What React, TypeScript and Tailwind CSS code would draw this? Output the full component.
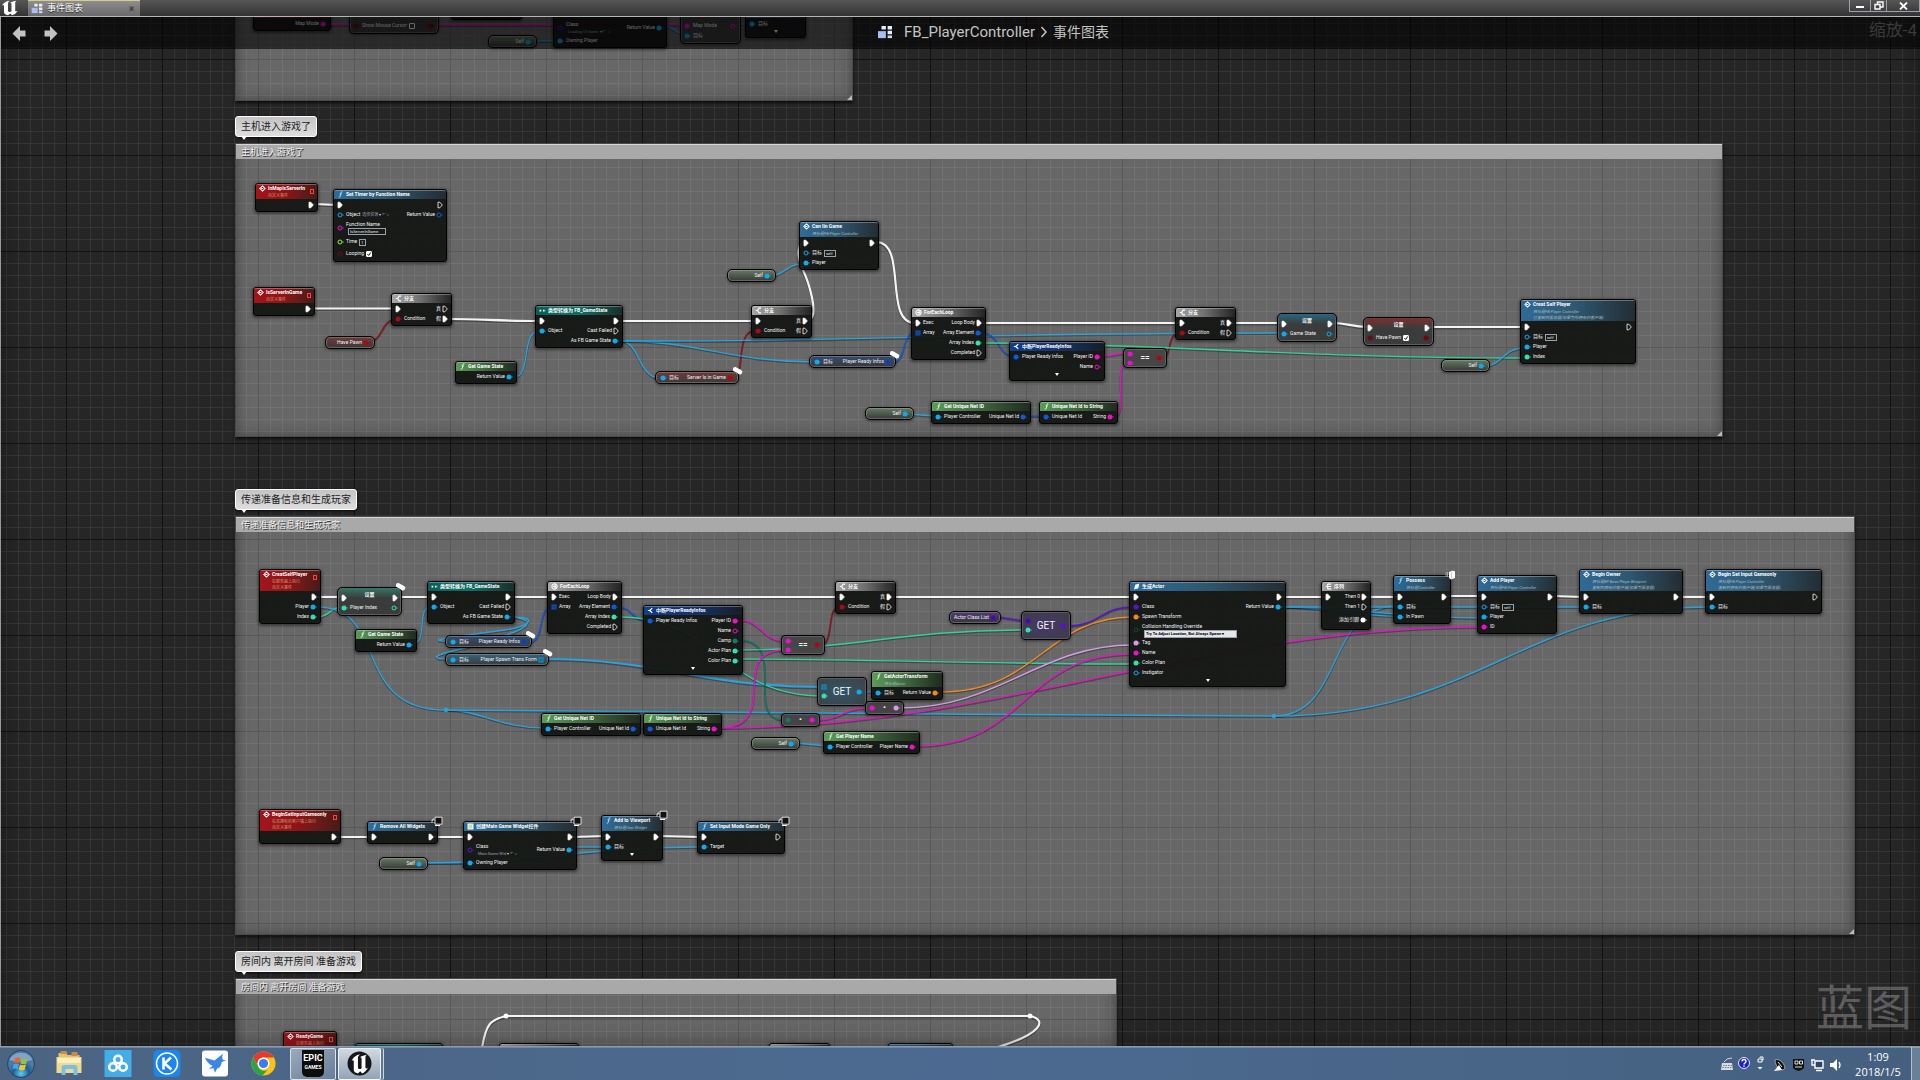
import type { ReactNode } from 'react';

type Shape = 'exec' | 'dot' | 'square';
type Pin = { shape: Shape; color: string; label?: string; open?: boolean; extra?: ReactNode };
type Row = { left?: Pin; right?: Pin; tall?: 'md' | 'lg' };
type Kind = 'event' | 'func' | 'pure' | 'cast' | 'macro' | 'struct';

const CYAN = '#14a8ea';
const BLUE = '#1558d6';
const MINT = '#35e0ae';
const PINK = '#e813c9';
const RED = '#a30d12';
const LILAC = '#d99be8';
const ORANGE = '#f08a24';
const PURPLE = '#5a14c8';
const TEAL = '#0f7a66';
const WIRE = '#2aa3dc';

const ex = (label?: string, open?: boolean): Pin => ({ shape: 'exec', color: '#fff', label, open });
const dot = (color: string, label?: string, open?: boolean, extra?: ReactNode): Pin => ({ shape: 'dot', color, label, open, extra });
const sq = (color: string, label?: string): Pin => ({ shape: 'square', color, label });

const TextBox = ({ value, name, wide }: { value: string; name: string; wide?: boolean }) => (
  <input
    aria-label={name}
    defaultValue={value}
    className={`h-[7px] border border-gray-400 bg-transparent px-px text-[4px] leading-none text-gray-200 ${wide ? 'w-[38px]' : value.length > 2 ? 'w-[12px]' : 'w-[7px]'}`}
  />
);

const Tick = ({ name, checked = true }: { name: string; checked?: boolean }) => (
  <span className="relative flex h-[6px] w-[6px]">
    <input type="checkbox" aria-label={name} defaultChecked={checked} className="peer h-[6px] w-[6px] appearance-none rounded-[1px] border border-white bg-transparent checked:bg-white" />
    <svg viewBox="0 0 6 6" className="pointer-events-none absolute inset-0 hidden peer-checked:block">
      <path d="M1.4 3l1.3 1.4L4.8 1.4" fill="none" stroke="#111" strokeWidth="1" />
    </svg>
  </span>
);

const AssetPick = ({ text }: { text: string }) => (
  <button type="button" className="flex items-center gap-px text-[4px] leading-none text-gray-400">
    {text}<span className="text-gray-300">▾</span><span>←</span><span>⌕</span>
  </button>
);

const PinIcon = ({ pin }: { pin: Pin }) => {
  if (pin.shape === 'exec') {
    return (
      <svg viewBox="0 0 6 8" className="h-[8px] w-[6px] shrink-0">
        <path d="M1 1.2h1.8L5.3 4 2.8 6.8H1z" fill={pin.open ? 'none' : pin.color} stroke={pin.color} strokeWidth=".8" />
      </svg>
    );
  }
  if (pin.shape === 'square') {
    return (
      <svg viewBox="0 0 6 6" className="h-[6px] w-[6px] shrink-0">
        <path d="M.5 .5h5v5h-5z" fill={pin.color} />
        <path d="M2.2 .5v5M3.9 .5v5M.5 2.2h5M.5 3.9h5" stroke="#111" strokeWidth=".3" />
      </svg>
    );
  }
  return (
    <svg viewBox="0 0 7 6" className="h-[6px] w-[7px] shrink-0">
      <circle cx="3" cy="3" r={pin.open ? 2 : 2.5} fill={pin.open ? 'none' : pin.color} stroke={pin.color} strokeWidth={pin.open ? 1 : 0} />
      <path d="M5.6 1.9L6.9 3 5.6 4.1z" fill={pin.color} />
    </svg>
  );
};

const headerStyles: Record<Kind, string> = {
  event: 'bg-linear-to-r from-[#a3151b] via-[#8b1318] to-[#471a17]',
  func: 'bg-linear-to-r from-[#2f6b98] via-[#2e566f] to-[#222d33]',
  pure: 'bg-linear-to-r from-[#5d9a5b] via-[#3f663e] to-[#1f2b1f]',
  cast: 'bg-linear-to-r from-[#0c5c57] via-[#0e6f67] to-[#16302c]',
  macro: 'bg-linear-to-r from-[#a8a8a8] via-[#6e6e6e] to-[#232423]',
  struct: 'bg-linear-to-r from-[#123f86] via-[#15336b] to-[#171d27]',
};

const HeadIcon = ({ kind, icon }: { kind: Kind; icon?: string }) => {
  const type = icon ?? kind;
  return (
    <svg viewBox="0 0 8 8" className="h-[7px] w-[7px] shrink-0" fill="none" stroke="#fff" strokeWidth="1.2">
      {(type === 'event' || type === 'call') && <path d="M4 1l3 3-3 3-3-3zM2.5 4h2.4" />}
      {(type === 'func' || type === 'pure') && <path d="M6.2 1C4.4.6 4.5 2 4.2 3.6 4 5.2 3.8 7.4 2 7M2.8 3.4h2.8" stroke={type === 'func' ? '#8fd0ff' : '#c9f5b8'} />}
      {type === 'cast' && <path d="M.6 4h2.6M4.6 4h2.6" strokeWidth="2" strokeDasharray="1.8 .6" />}
      {type === 'macro' && <path d="M1 4h2M7 1.3H4.6L3 4l1.6 2.7H7" />}
      {type === 'loop' && <><circle cx="4" cy="4" r="3" /><path d="M2.2 4h3M4 2.5L5.6 4 4 5.5" /></>}
      {type === 'seq' && <path d="M1 4h2M3 1v6M3 1.3h4M3 4h4M3 6.7h4" />}
      {type === 'struct' && <path d="M1 4h2l3-2.6M3 4l3 2.6" strokeWidth="1.3" />}
      {type === 'spawn' && <path d="M2 6.5l1-4 3.5-1-1 4z" fill="#fff" />}
      {type === 'widget' && <path d="M1.2 1.2h5.6v5.6H1.2z" fill="#cfd8b0" />}
    </svg>
  );
};

const PinRow = ({ row }: { row: Row }) => (
  <div className={`flex items-center justify-between ${row.tall === 'lg' ? 'h-[16px]' : row.tall === 'md' ? 'h-[12px]' : 'h-[10px]'}`}>
    <div className="flex items-center gap-[2px]">
      {row.left && (
        <>
          <PinIcon pin={row.left} />
          {row.tall === 'lg' ? (
            <div className="flex flex-col gap-px leading-[6px]"><span>{row.left.label}</span><div className="flex h-[7px] pl-[2px]">{row.left.extra}</div></div>
          ) : (
            <><span>{row.left.label}</span>{row.left.extra}</>
          )}
        </>
      )}
    </div>
    <div className="flex items-center gap-px">
      {row.right && <><span>{row.right.label}</span>{row.right.extra}<PinIcon pin={row.right} /></>}
    </div>
  </div>
);

// little marker that sits on a node's corner
const Badge = ({ type }: { type: 'tag' | 'screen' | 'server' }) => (
  <svg viewBox="0 0 12 10" className="absolute -top-[6px] -right-[6px] h-[10px] w-[12px]">
    {type === 'tag' && <path d="M3.5 1L9 4a2.200 2.200 0 0 1-2 4.200L3 5.800A2.400 2.400 0 0 1 3.500 1z" fill="#fff" />}
    {type === 'screen' && <><path d="M4 1.2h7v7H4z" fill="#111" stroke="#ddd" strokeWidth="1" /><path d="M3 3C1 3 1 5 1 6.5M4 9.5h5" stroke="#fff" fill="none" /></>}
    {type === 'server' && <><path d="M5 2l4-1.5 2 1V8L7 9.5 5 8z" fill="#fff" /><path d="M2 2.5v4M3.5 2v5M7.5 2.5v6" stroke="#bbb" strokeWidth=".8" /></>}
  </svg>
);

type NodeData = {
  x: number; y: number; w: number; kind: Kind; title: string; icon?: string; sub?: string[];
  rows: Row[]; caret?: boolean; badge?: 'tag' | 'screen' | 'server';
};

const self = <TextBox name="self" value="self" />;

const branch = (x: number, y: number, t: boolean, f: boolean): NodeData => ({
  x, y, w: 61, kind: 'macro', title: '分支',
  rows: [{ left: ex(), right: ex('真', t) }, { left: dot(RED, 'Condition'), right: ex('假', f) }],
});
const cast = (x: number, y: number): NodeData => ({
  x, y, w: 88, kind: 'cast', title: '类型转换为 FB_GameState',
  rows: [{ left: ex(), right: ex() }, { left: dot(CYAN, 'Object'), right: ex('Cast Failed', true) }, { right: dot(CYAN, 'As FB Game State') }],
});
const loop = (x: number, y: number): NodeData => ({
  x, y, w: 75, kind: 'macro', icon: 'loop', title: 'ForEachLoop',
  rows: [
    { left: ex('Exec'), right: ex('Loop Body') },
    { left: sq(BLUE, 'Array'), right: dot(BLUE, 'Array Element') },
    { right: dot(MINT, 'Array Index') },
    { right: ex('Completed', true) },
  ],
});
const gameState = (x: number, y: number): NodeData => ({ x, y, w: 62, kind: 'pure', title: 'Get Game State', rows: [{ right: dot(CYAN, 'Return Value') }] });
const netId = (x: number, y: number): NodeData => ({ x, y, w: 100, kind: 'pure', title: 'Get Unique Net ID', rows: [{ left: dot(CYAN, 'Player Controller'), right: dot(BLUE, 'Unique Net Id') }] });
const netIdString = (x: number, y: number): NodeData => ({ x, y, w: 79, kind: 'pure', title: 'Unique Net Id to String', rows: [{ left: dot(BLUE, 'Unique Net Id'), right: dot(PINK, 'String') }] });

const nodes: NodeData[] = [
  { x: 255, y: 183, w: 63, kind: 'event', title: 'InMapIsServerIn', sub: ['自定义事件'], rows: [{ right: ex() }] },
  {
    x: 333, y: 189, w: 114, kind: 'func', title: 'Set Timer by Function Name',
    rows: [
      { left: ex(), right: ex('', true) },
      { left: dot(CYAN, 'Object', true, <AssetPick text="选择资源" />), right: dot(BLUE, 'Return Value', true) },
      { left: dot(PINK, 'Function Name', true, <TextBox name="Function Name" value="IsServerInGame" wide />), tall: 'lg' },
      { left: dot('#9bea3c', 'Time', true, <TextBox name="Time" value="1" />), tall: 'md' },
      { left: dot('#6b0a0a', 'Looping', true, <Tick name="Looping" />), tall: 'md' },
    ],
  },
  { x: 253, y: 287, w: 62, kind: 'event', title: 'IsServerInGame', sub: ['自定义事件'], rows: [{ right: ex() }] },
  branch(391, 293, true, false),
  cast(535, 305),
  gameState(455, 361),
  {
    x: 799, y: 221, w: 80, kind: 'func', icon: 'call', title: 'Can Iin Game', sub: ['目标是FB Player Controller'],
    rows: [{ left: ex(), right: ex() }, { left: dot(CYAN, '目标', true, self) }, { left: dot(CYAN, 'Player') }],
  },
  branch(751, 305, false, true),
  loop(911, 307),
  {
    x: 1009, y: 341, w: 96, kind: 'struct', title: '中断PlayerReadyInfos', caret: true,
    rows: [{ left: dot(BLUE, 'Player Ready Infos'), right: dot(PINK, 'Player ID') }, { right: dot(PINK, 'Name', true) }],
  },
  netId(931, 401),
  netIdString(1039, 401),
  branch(1175, 307, false, true),
  {
    x: 1520, y: 299, w: 116, kind: 'func', icon: 'call', title: 'Creat Self Player', sub: ['目标是FB Player Controller', '已复制到服务器(如果为所拥有的客户端)'],
    rows: [{ left: ex(), right: ex('', true) }, { left: dot(CYAN, '目标', true, self) }, { left: dot(CYAN, 'Player') }, { left: dot(MINT, 'Index') }],
  },
  { x: 259, y: 569, w: 62, kind: 'event', title: 'CreatSelfPlayer', sub: ['在服务器上执行', '自定义事件'], rows: [{ right: ex() }, { right: dot(CYAN, 'Player') }, { right: dot(MINT, 'Index') }] },
  cast(427, 581),
  gameState(355, 629),
  loop(547, 581),
  netId(541, 713),
  {
    x: 643, y: 605, w: 100, kind: 'struct', title: '中断PlayerReadyInfos', caret: true,
    rows: [
      { left: dot(BLUE, 'Player Ready Infos'), right: dot(PINK, 'Player ID') },
      { right: dot(PINK, 'Name', true) },
      { right: dot(TEAL, 'Camp') },
      { right: dot(MINT, 'Actor Plan') },
      { right: dot(MINT, 'Color Plan') },
    ],
  },
  netIdString(643, 713),
  branch(835, 581, false, true),
  { x: 871, y: 671, w: 72, kind: 'pure', title: 'GetActorTransform', sub: ['目标是Actor'], rows: [{ left: dot(CYAN, '目标'), right: dot(ORANGE, 'Return Value') }] },
  { x: 823, y: 731, w: 97, kind: 'pure', title: 'Get Player Name', rows: [{ left: dot(CYAN, 'Player Controller'), right: dot(PINK, 'Player Name') }] },
  {
    x: 1129, y: 581, w: 157, kind: 'func', icon: 'spawn', title: '生成Actor', caret: true,
    rows: [
      { left: ex(), right: ex() },
      { left: dot(PURPLE, 'Class'), right: dot(CYAN, 'Return Value') },
      { left: dot(ORANGE, 'Spawn Transform') },
      {
        left: dot('#0b4a3c', 'Collision Handling Override', true, (
          <select aria-label="Collision Handling Override" className="h-[8px] w-[93px] appearance-none border border-gray-400 bg-gray-200 px-px text-[4px] leading-[6px] font-bold text-black">
            <option>Try To Adjust Location, But Always Spawn ▾</option>
          </select>
        )), tall: 'lg',
      },
      { left: dot(LILAC, 'Tag') },
      { left: dot(PINK, 'Name') },
      { left: dot(MINT, 'Color Plan') },
      { left: dot(CYAN, 'Instigator', true) },
    ],
  },
  {
    x: 1321, y: 581, w: 50, kind: 'macro', icon: 'seq', title: '序列',
    rows: [{ left: ex(), right: ex('Then 0') }, { right: ex('Then 1', true) }, { right: dot('#fff', '添加引脚'), tall: 'lg' }],
  },
  {
    x: 1393, y: 575, w: 58, kind: 'func', title: 'Possess', sub: ['目标是Controller'], badge: 'server',
    rows: [{ left: ex(), right: ex() }, { left: dot(CYAN, '目标') }, { left: dot(CYAN, 'In Pawn') }],
  },
  {
    x: 1477, y: 575, w: 80, kind: 'func', icon: 'call', title: 'Add Player', sub: ['目标是FB Player Controller'],
    rows: [{ left: ex(), right: ex() }, { left: dot(CYAN, '目标', true, self) }, { left: dot(CYAN, 'Player') }, { left: dot(PINK, 'ID') }],
  },
  { x: 1579, y: 569, w: 104, kind: 'func', icon: 'call', title: 'Begin Owner', sub: ['目标是BP Base Player Blueprint', '复制到拥有的客户端(如果为服务器)'], rows: [{ left: ex(), right: ex() }, { left: dot(CYAN, '目标') }] },
  { x: 1705, y: 569, w: 117, kind: 'func', icon: 'call', title: 'Begin Set Input Gameonly', sub: ['目标是FB Player Controller', '复制到拥有的客户端(如果为服务器)'], rows: [{ left: ex(), right: ex('', true) }, { left: dot(CYAN, '目标') }] },
  { x: 259, y: 809, w: 82, kind: 'event', title: 'BeginSetInputGameonly', sub: ['在其拥有的客户端上执行', '自定义事件'], rows: [{ right: ex() }] },
  { x: 367, y: 821, w: 71, kind: 'func', title: 'Remove All Widgets', badge: 'screen', rows: [{ left: ex(), right: ex() }] },
  {
    x: 463, y: 821, w: 114, kind: 'func', icon: 'widget', title: '创建Main Game Widget控件', badge: 'screen',
    rows: [
      { left: ex(), right: ex() },
      { left: dot(PURPLE, 'Class', true, <AssetPick text="Main Game Wid" />), right: dot(CYAN, 'Return Value'), tall: 'lg' },
      { left: dot(CYAN, 'Owning Player') },
    ],
  },
  { x: 601, y: 815, w: 62, kind: 'func', title: 'Add to Viewport', sub: ['目标是User Widget'], badge: 'screen', caret: true, rows: [{ left: ex(), right: ex() }, { left: dot(CYAN, '目标') }] },
  { x: 697, y: 821, w: 88, kind: 'func', title: 'Set Input Mode Game Only', badge: 'screen', rows: [{ left: ex(), right: ex('', true) }, { left: dot(CYAN, 'Target') }] },
  // bottom group, only the tops are scrolled into view
  { x: 283, y: 1031, w: 54, kind: 'event', title: 'ReadyGame', sub: ['在服务器上执行'], rows: [] },
  { x: 355, y: 1043, w: 88, kind: 'cast', title: '', rows: [] },
  { x: 499, y: 1043, w: 80, kind: 'macro', title: '', rows: [] },
  { x: 769, y: 1043, w: 61, kind: 'macro', title: '', rows: [] },
  { x: 888, y: 1043, w: 65, kind: 'func', title: '', rows: [] },
  // top group, mostly scrolled out of view
  { x: 253, y: 8, w: 78, kind: 'event', title: '', rows: [{ right: dot(PINK, 'Map Mode') }] },
  { x: 451, y: -3, w: 71, kind: 'func', title: '', rows: [{}] },
  {
    x: 553, y: -1, w: 114, kind: 'func', title: '',
    rows: [{}, { left: dot(PURPLE, 'Class', true, <AssetPick text="Loading UI Game" />), right: dot(CYAN, 'Return Value'), tall: 'lg' }, { left: dot(CYAN, 'Owning Player') }],
  },
  { x: 745, y: 8, w: 61, kind: 'func', title: '', caret: true, rows: [{ left: dot(CYAN, '目标') }] },
];

const BlueprintNode = ({ n }: { n: NodeData }) => (
  <article className="absolute rounded-[3px] border border-black bg-[#131513]/94 shadow-[0_1px_3px_1px_rgba(0,0,0,0.45)]" style={{ left: n.x, top: n.y, width: n.w }}>
    <header className={`relative flex gap-[2px] rounded-t-[2px] border-t border-white/30 px-[3px] ${headerStyles[n.kind]}`}>
      {n.title && <HeadIcon kind={n.kind} icon={n.icon} />}
      <div className="min-w-0 whitespace-nowrap pb-px">
        <h3 className="h-[7px] text-[5px] font-bold leading-[7px] text-white">{n.title}</h3>
        {n.sub?.map((s) => (
          <p key={s} className={`h-[6px] text-[4px] leading-[7px] ${n.kind === 'event' ? 'text-[#d9996c]' : 'italic text-[#a5b8bd]'}`}>{s}</p>
        ))}
      </div>
      {n.kind === 'event' && n.title && <span className="absolute right-[3px] top-[4px] h-[5px] w-[4px] border border-[#ff4040]" />}
    </header>
    <div className="px-[3px] pt-px text-[5px] whitespace-nowrap text-gray-100">
      {n.rows.map((r, i) => <PinRow key={i} row={r} />)}
    </div>
    {n.caret ? <div className="flex h-[8px] justify-center"><svg viewBox="0 0 6 5" className="h-[5px] w-[6px]"><path d="M1 1h4L3 4z" fill="#fff" /></svg></div> : <div className="h-px" />}
    {n.badge && <Badge type={n.badge} />}
  </article>
);

type PillData = { x: number; y: number; w: number; tone: 'green' | 'red' | 'blue' | 'cyan' | 'purple'; label: string; target?: boolean; pin: Pin; tag?: boolean };
const pillTones = {
  green: 'from-[#667a64] to-[#383a37]',
  red: 'from-[#6e3a3a] to-[#3b3838]',
  blue: 'from-[#364a6e] to-[#37393c]',
  cyan: 'from-[#36637a] to-[#373b3d]',
  purple: 'from-[#4d3b6e] to-[#38363c]',
};
const selfPill = (x: number, y: number): PillData => ({ x, y, w: 49, tone: 'green', label: 'Self', pin: dot(CYAN) });
const pills: PillData[] = [
  { x: 325, y: 336, w: 50, tone: 'red', label: 'Have Pawn', pin: dot(RED) },
  selfPill(727, 269),
  { x: 655, y: 371, w: 84, tone: 'red', label: 'Server Is in Game', target: true, pin: dot(RED), tag: true },
  { x: 809, y: 355, w: 87, tone: 'blue', label: 'Player Ready Infos', target: true, pin: sq(BLUE), tag: true },
  selfPill(865, 407),
  selfPill(1441, 359),
  { x: 445, y: 635, w: 87, tone: 'blue', label: 'Player Ready Infos', target: true, pin: sq(BLUE), tag: true },
  { x: 445, y: 653, w: 104, tone: 'cyan', label: 'Player Spawn Trans Form', target: true, pin: sq(CYAN), tag: true },
  { x: 949, y: 611, w: 52, tone: 'purple', label: 'Actor Class List', pin: sq(PURPLE) },
  selfPill(751, 737),
  selfPill(379, 857),
  selfPill(488, 35),
];

const Pill = ({ p }: { p: PillData }) => (
  <div
    className={`absolute flex h-[13px] items-center justify-between rounded-[5px] border border-black bg-linear-to-b px-[4px] text-[5px] whitespace-nowrap text-gray-100 shadow-[inset_0_0_0_1px_rgba(200,200,200,0.3),0_1px_3px_rgba(0,0,0,0.5)] ${pillTones[p.tone]}`}
    style={{ left: p.x, top: p.y, width: p.w }}
  >
    <div className="flex items-center gap-[2px]">{p.target && <><PinIcon pin={dot(CYAN)} />目标</>}</div>
    <div className="flex items-center gap-px">{p.label}<PinIcon pin={p.pin} /></div>
    {p.tag && <Badge type="tag" />}
  </div>
);

type SetData = { x: number; y: number; w: number; tone: string; rows: Row[]; title?: string; tag?: boolean };
const setters: SetData[] = [
  { x: 1277, y: 313, w: 60, title: '设置', tone: 'from-[#2a6680]', rows: [{ left: ex(), right: ex() }, { left: dot(CYAN, 'Game State'), right: dot(CYAN, '', true) }] },
  { x: 1363, y: 317, w: 71, title: '设置', tone: 'from-[#7c2f2f]', rows: [{ left: ex(), right: ex() }, { left: dot('#6b0a0a', 'Have Pawn', false, <Tick name="Have Pawn" />), right: dot('#6b0a0a') }] },
  { x: 337, y: 587, w: 65, title: '设置', tone: 'from-[#347866]', rows: [{ left: ex(), right: ex() }, { left: dot(MINT, 'Player Index'), right: dot(MINT, '', true) }], tag: true },
  { x: 349, y: 5, w: 90, tone: 'from-[#7c2f2f]', rows: [{}, { left: dot('#6b0a0a', 'Show Mouse Cursor', false, <Tick name="Show Mouse Cursor" checked={false} />), right: dot('#6b0a0a') }] },
  { x: 680, y: 5, w: 61, tone: 'from-[#7c2a72]', rows: [{}, { left: dot(PINK, 'Map Mode'), right: dot(PINK, '', true) }, { left: dot(CYAN, '目标') }] },
];

const Setter = ({ s }: { s: SetData }) => (
  <div className="absolute rounded-[5px] border border-black bg-[#353736]/90 text-[5px] whitespace-nowrap text-gray-100 shadow-[inset_0_0_0_1px_rgba(200,200,200,0.25),0_1px_3px_rgba(0,0,0,0.5)]" style={{ left: s.x, top: s.y, width: s.w }}>
    <h3 className={`mx-px h-[10px] rounded-t-[4px] bg-linear-to-b to-transparent text-center leading-[12px] font-bold ${s.tone}`}>{s.title}</h3>
    <div className="-mt-[5px] px-[3px] pb-[2px]">{s.rows.map((r, i) => <PinRow key={i} row={r} />)}</div>
    {s.tag && <Badge type="tag" />}
  </div>
);

type OpData = { x: number; y: number; w: number; h: number; text: string; big?: boolean; tone: string; ins: Pin[]; out: Pin };
const ops: OpData[] = [
  { x: 1123, y: 348, w: 44, h: 20, text: '==', tone: 'bg-[#454545]/95', ins: [dot(PINK), dot(PINK)], out: dot(RED) },
  { x: 781, y: 635, w: 44, h: 20, text: '==', tone: 'bg-[#454545]/95', ins: [dot(PINK), dot(PINK)], out: dot(RED) },
  { x: 1021, y: 611, w: 50, h: 29, text: 'GET', big: true, tone: 'bg-radial from-[#45386a] to-[#3e3c44]', ins: [sq(PURPLE), dot(MINT)], out: dot(PURPLE) },
  { x: 817, y: 677, w: 50, h: 29, text: 'GET', big: true, tone: 'bg-radial from-[#2f566a] to-[#3d4143]', ins: [sq(CYAN), dot(MINT)], out: dot(CYAN) },
  { x: 865, y: 701, w: 39, h: 14, text: '•', tone: 'bg-[#454145]/95', ins: [dot(PINK)], out: dot(LILAC) },
  { x: 781, y: 713, w: 39, h: 14, text: '•', tone: 'bg-[#454145]/95', ins: [dot(TEAL)], out: dot(PINK) },
];

const Operator = ({ o }: { o: OpData }) => (
  <div className={`absolute flex items-center justify-between rounded-[4px] border border-black px-[3px] text-gray-100 shadow-[inset_0_0_0_1px_rgba(200,200,200,0.2),0_1px_3px_rgba(0,0,0,0.5)] ${o.tone}`} style={{ left: o.x, top: o.y, width: o.w, height: o.h }}>
    <div className="flex flex-col gap-[3px]">{o.ins.map((p, i) => <PinIcon key={i} pin={p} />)}</div>
    <span className={o.big ? 'text-[10px]' : 'text-[8px] leading-none font-bold'}>{o.text}</span>
    <PinIcon pin={o.out} />
  </div>
);

const W = '#f4f4f4';
const wires: [string, string, number][] = [
  // top group
  [PINK, 'M325 25H690', 1], [WIRE, 'M530 41H557', 1], [WIRE, 'M660 25C675 25 675 35 687 35', 1], [WIRE, 'M738 24H752', 1],
  // host enters the game
  [W, 'M314 204L337 205', 2], [W, 'M311 308.5H395', 2], [W, 'M449 319C480 319 500 321 539 321', 2], [W, 'M620 321H755', 2],
  [W, 'M809 320C820 316 808 280 802 268C797 255 797 246 804 242', 2], [W, 'M876 242C908 242 883 323 915 323', 2],
  [W, 'M982 323H1179', 2], [W, 'M1232 323H1281', 2], [W, 'M1333 323C1347 323 1352 327 1367 327', 2], [W, 'M1430 327H1524', 2],
  ['#8a1420', 'M370 341C382 341 382 320 394 320', 1], ['#8a1420', 'M733 378C746 378 735 331 754 331', 1], ['#8a1420', 'M1163 357C1172 357 1167 333 1179 333', 1],
  [WIRE, 'M514 377C532 377 520 331 540 331', 1], [WIRE, 'M620 341C640 341 638 378 660 378', 1], [WIRE, 'M620 341C700 341 730 362 813 362', 1],
  [WIRE, 'M620 341C850 342 950 333 1281 333', 1], [BLUE, 'M893 362C907 362 901 333 915 333', 1], [BLUE, 'M982 333C1000 333 998 356 1014 356', 1],
  ['#2fd39d', 'M982 343C1150 343 1300 358 1524 358', 1], [PINK, 'M1101 356C1115 356 1115 353 1128 353', 1], [PINK, 'M1114 416C1130 416 1111 362 1129 362', 1],
  [WIRE, 'M1484 366C1503 366 1503 348 1524 348', 1], [WIRE, 'M770 276C785 276 785 264 803 264', 1], [WIRE, 'M908 414L935 416', 1], [BLUE, 'M1028 416H1043', 1],
  // spawn players
  [W, 'M317 597H341', 2], [W, 'M398 597H431', 2], [W, 'M511 597H551', 2], [W, 'M618 597H839', 2], [W, 'M892 597H1133', 2], [W, 'M1282 597H1325', 2],
  [W, 'M1367 597H1397', 2], [W, 'M1447 596H1481', 2], [W, 'M1553 596L1583 597', 2], [W, 'M1679 597H1709', 2],
  ['#2fd39d', 'M317 617C330 617 330 607 342 607', 1], [WIRE, 'M317 607C390 607 350 710 446 710', 1], [WIRE, 'M446 710C480 710 500 728 545 728', 1],
  [WIRE, 'M446 710C700 710 1000 716 1274 716', 1], [WIRE, 'M1274 716C1345 716 1325 606 1397 606', 1], [WIRE, 'M1274 716C1480 716 1520 607 1709 607', 1],
  [WIRE, 'M413 644C428 644 416 607 431 607', 1], [WIRE, 'M511 617C540 617 530 626 505 630L460 636C434 640 434 641 449 641', 1],
  [WIRE, 'M511 617C545 620 520 632 490 640L465 648C430 656 430 659 449 659', 1], [BLUE, 'M530 642C545 642 538 607 551 607', 1],
  [WIRE, 'M545 659C660 659 700 687 824 687', 2], [BLUE, 'M618 607C632 607 632 620 647 620', 1], ['#2fd39d', 'M618 617C720 617 720 696 824 696', 1],
  [PINK, 'M739 620C762 620 762 641 785 641', 1], [TEAL, 'M739 640C790 640 742 720 785 720', 1], ['#2fd39d', 'M739 650C850 650 900 630 1025 630', 1],
  ['#2fd39d', 'M739 659C850 659 1000 664 1133 664', 1], ['#8a1420', 'M820 645C835 645 826 607 839 607', 1], [PINK, 'M718 728C785 728 725 650 785 650', 1],
  [PINK, 'M816 720C842 720 842 708 869 708', 1], [PINK, 'M718 728C1000 728 1200 627 1481 627', 1], [PINK, 'M916 746C1030 746 1020 654 1133 654', 1],
  [LILAC, 'M900 708C1000 708 1040 645 1133 645', 1], [ORANGE, 'M939 692C1040 692 1045 617 1133 617', 1],
  [PURPLE, 'M998 617L1025 621', 1], [PURPLE, 'M1067 626C1100 626 1100 607 1133 607', 1], [WIRE, 'M863 692H875', 1], [WIRE, 'M796 743L827 746', 1],
  [BLUE, 'M637 728H647', 1], [WIRE, 'M1282 607C1330 607 1350 616 1397 616', 1], [WIRE, 'M1282 607C1350 607 1400 618 1481 618', 1], [WIRE, 'M1282 607H1583', 1],
  [W, 'M337 837H371', 2], [W, 'M434 837H467', 2], [W, 'M573 837L605 836', 2], [W, 'M659 836L701 837', 2],
  [WIRE, 'M422 863H467', 1], [WIRE, 'M573 847H605', 1], [WIRE, 'M422 863C540 863 580 847 701 847', 1],
  [W, 'M482 1048C486 1024 490 1020 506 1016H1030C1048 1020 1042 1034 995 1048', 2],
];

const Wires = () => (
  <svg className="absolute inset-0 h-full w-full" fill="none">
    {wires.map(([color, d, width]) => (
      <g key={d}>
        <path d={d} stroke="#000" strokeOpacity=".3" strokeWidth={width + 1} transform="translate(0 1)" />
        <path d={d} stroke={color} strokeWidth={width === 1 ? 1.4 : 2.2} />
      </g>
    ))}
    <circle cx="446" cy="710" r="2.2" fill={WIRE} />
    <circle cx="1274" cy="716" r="2.2" fill={WIRE} />
    <circle cx="506" cy="1016" r="2.5" fill="#fff" />
    <circle cx="1030" cy="1016" r="2.5" fill="#fff" />
  </svg>
);

const Grid = () => (
  <svg className="absolute inset-0 h-full w-full">
    <defs>
      <pattern id="minor" x="6" y="11" width="12" height="12" patternUnits="userSpaceOnUse">
        <path d="M.5 0v12M0 .5h12" stroke="#353535" strokeWidth="1" />
      </pattern>
      <pattern id="major" x="66" y="59" width="96" height="96" patternUnits="userSpaceOnUse">
        <path d="M.5 0v96M0 .5h96" stroke="#121212" strokeWidth="1" />
      </pattern>
    </defs>
    <rect width="100%" height="100%" fill="#262626" />
    <rect width="100%" height="100%" fill="url(#minor)" />
    <rect width="100%" height="100%" fill="url(#major)" />
  </svg>
);

const comments = [
  { x: 235, y: -60, w: 618, h: 161, text: '' },
  { x: 235, y: 143, w: 1488, h: 294, text: '主机进入游戏了' },
  { x: 235, y: 516, w: 1620, h: 419, text: '传递准备信息和生成玩家' },
  { x: 235, y: 978, w: 882, h: 200, text: '房间内 离开房间 准备游戏' },
];

const Comment = ({ x, y, w, h, text }: (typeof comments)[number]) => (
  <>
    {text && (
      <div className="absolute h-[21px] rounded-[3px] border border-white bg-linear-to-b from-[#c4c4c4] to-[#dedede] px-[5px] text-[10px] leading-[19px] whitespace-nowrap text-[#222] shadow-[0_1px_3px_rgba(0,0,0,0.8)]" style={{ left: x, top: y - 27 }}>
        {text}
        <svg viewBox="0 0 6 4" className="absolute top-[19px] left-[5px] h-[4px] w-[6px]"><path d="M0 0h6L3 4z" fill="#fff" /></svg>
      </div>
    )}
    <section className="absolute border border-[#4a4a4a] bg-white/30 shadow-[inset_0_0_14px_rgba(0,0,0,0.35),0_2px_3px_rgba(0,0,0,0.7)]" style={{ left: x, top: y, width: w, height: h }}>
      {text && <h2 className="h-[15px] border-t border-[#d6d6d6] bg-[#a9a9a9] px-[5px] text-[9px] leading-[14px] text-[#eee] [text-shadow:1px_1px_0_#333]">{text}</h2>}
      <svg viewBox="0 0 6 6" className="absolute right-0 bottom-0 h-[5px] w-[5px]"><path d="M6 0v6H0z" fill="#bbb" /></svg>
    </section>
  </>
);

const BoardIcon = ({ small }: { small?: boolean }) => (
  <svg viewBox="0 0 18 16" className={small ? 'h-[11px] w-[12px]' : 'h-[14px] w-[18px]'}>
    <path d="M5 1h5v4H5zM12 1h5v4h-5zM12 6.5h5v4h-5z" fill="#e8ecf6" />
    <path d="M1 7h9v8H1z" fill="#a9bdf0" />
    <path d="M12 12h5v3h-5z" fill="#cfd8f2" />
  </svg>
);

const UnrealMark = ({ color }: { color: string }) => (
  <path d="M3 9C5 4 9 3 11 2.5 10 3.5 9 4.5 9 6v9c0 2 2 2.5 3.5 1V7c0-1-.5-1.5-1.5-1.5C13 4 15 3.5 17.5 3c-1 1-1.3 1.6-1.3 2.6V15c0 1.5 1 1.5 2.5.6C17 18.5 15 20.5 13 21l-1.8-2-2.2 2c-3-.5-4-2-4-4V9.5C5 8 4 8 3 9z" fill={color} />
);

const TitleBar = () => (
  <header className="relative z-10 flex h-[17px] shrink-0 items-stretch border-b border-[#b5b5b5] bg-linear-to-b from-[#565656] to-[#333]">
    <div className="flex w-[28px] items-center pl-px">
      <svg viewBox="2 2 18 20" preserveAspectRatio="none" className="h-[16px] w-[18px]"><UnrealMark color="#fff" /></svg>
    </div>
    <button type="button" className="flex w-[112px] items-center gap-1 border-t border-[#d8cd8e] bg-linear-to-b from-[#8d8d8d] to-[#6a6a6a] pr-[6px] pl-[3px] text-[9px] leading-none text-white [text-shadow:0_1px_1px_#222]">
      <BoardIcon small />
      <span>事件图表</span>
      <span className="ml-auto text-[#444]">×</span>
    </button>
    <div className="ml-auto flex h-[12px] border border-t-0 border-gray-400 text-white">
      <button type="button" aria-label="最小化" className="flex w-[21px] items-end justify-center border-r border-gray-400 pb-[3px]"><span className="h-[2px] w-[8px] bg-white" /></button>
      <button type="button" aria-label="还原" className="flex w-[16px] items-center justify-center border-r border-gray-400">
        <svg viewBox="0 0 10 9" className="h-[9px] w-[10px]" fill="none" stroke="#fff" strokeWidth="1.4"><path d="M1 3.5h5v4.5H1zM3.5 3V1h5.5v5H6.5" /></svg>
      </button>
      <button type="button" aria-label="关闭" className="flex w-[32px] items-center justify-center">
        <svg viewBox="0 0 9 8" className="h-[8px] w-[9px]" stroke="#fff" strokeWidth="1.8"><path d="M1 .5l7 7M8 .5l-7 7" /></svg>
      </button>
    </div>
  </header>
);

const ArrowIcon = ({ flip }: { flip?: boolean }) => (
  <svg viewBox="0 0 14 16" className={`h-[17px] w-[14px] ${flip ? 'rotate-180' : ''}`}>
    <path d="M0.500 8L8 .5v4.500h5.500v6H8v4.500z" fill="#c2c2c2" />
  </svg>
);

const Toolbar = () => (
  <nav className="relative grid h-8 grid-cols-[1fr_auto_1fr] items-center bg-black/60">
    <div className="flex gap-[18px] pl-[11px]">
      <button type="button" aria-label="后退"><ArrowIcon /></button>
      <button type="button" aria-label="前进"><ArrowIcon flip /></button>
    </div>
    <div className="flex items-center pb-px pl-[64px] text-sm text-[#c4c4c4]">
      <BoardIcon />
      <a href="#blueprint" className="ml-[10px] text-[15px]">FB_PlayerController</a>
      <svg viewBox="0 0 8 12" className="mx-[5px] h-[12px] w-[8px]" fill="none" stroke="#c4c4c4" strokeWidth="1.5"><path d="M1.5 1l4.5 5-4.5 5" /></svg>
      <span>事件图表</span>
    </div>
    <span className="pr-[3px] pb-[5px] text-right text-[17px] text-[#3a3a3a]">缩放-4</span>
  </nav>
);

const Taskbar = () => (
  <footer className="flex h-[34px] shrink-0 items-stretch border-t border-[#8d99a6] bg-linear-to-r from-[#4b6482] via-[#4c6a91] to-[#45607f] shadow-[inset_0_1px_0_#6e87a5]">
    <div className="flex items-center pl-[7px]">
      <button type="button" aria-label="开始" className="mr-[20px]">
        <svg viewBox="0 0 28 28" className="h-[28px] w-[28px]">
          <defs><radialGradient id="orb" cy="85%"><stop offset="0" stopColor="#5ad0f5" /><stop offset=".6" stopColor="#1d5c94" /><stop offset="1" stopColor="#4c7ba6" /></radialGradient></defs>
          <circle cx="14" cy="14" r="13.5" fill="url(#orb)" stroke="#24415f" />
          <path d="M2.5 10a12 10 0 0 1 23 0C18 12 9 12 2.5 10z" fill="#fff" opacity=".3" />
          <path d="M8 8.5q3-1.8 5.5-.3l-1.2 5q-2.5-1.3-5.5 0z" fill="#f0622c" />
          <path d="M14.5 8.7q3 1.4 6-.2l-1.3 5.2q-3 1.3-5.9-.2z" fill="#8cc63e" />
          <path d="M6.500 14.2q3-1.4 5.6-.1l-1.3 5.2q-2.5-1.5-5.6.1z" fill="#3fa9ea" />
          <path d="M13 14.4q3 1.5 6 .1l-1.4 5.2q-3 1.5-6-.1z" fill="#fbc02d" />
        </svg>
      </button>
      <button type="button" aria-label="资源管理器" className="mr-[21px]">
        <svg viewBox="0 0 27 27" className="h-[27px] w-[28px]">
          <path d="M3 3h7l2 2h12v17H3z" fill="#e6c568" /><path d="M5 1h6l1 3H5zM16 2h6v4h-6z" fill="#c98a4c" />
          <path d="M1 7h25v16H1z" fill="#f0d98c" /><path d="M2 8h23v5H2z" fill="#fcefc0" />
          <path d="M6 25v-7q0-3 3-3h10q3 0 3 3v7h-4v-6h-8v6z" fill="#79bfe6" />
        </svg>
      </button>
      <button type="button" aria-label="百度网盘" className="mr-[21px]">
        <svg viewBox="0 0 27 27" className="h-[27px] w-[28px]">
          <path d="M0 0h27v27H0z" fill="#43ade6" />
          <g fill="none" stroke="#fff" strokeWidth="2.6"><circle cx="13.5" cy="9.500" r="3.800" /><circle cx="8.500" cy="17" r="3.800" /><circle cx="18.500" cy="17" r="3.800" /></g>
        </svg>
      </button>
      <button type="button" aria-label="酷狗" className="mr-[21px]">
        <svg viewBox="0 0 27 27" className="h-[27px] w-[28px]">
          <rect width="27" height="27" rx="5" fill="#1b86f0" /><circle cx="13.5" cy="13.5" r="10.5" fill="none" stroke="#fff" strokeWidth="1.5" />
          <path d="M10 7.5v12M17.500 7.500L11 13.500l7 6" fill="none" stroke="#fff" strokeWidth="2.6" />
        </svg>
      </button>
      <button type="button" aria-label="迅雷" className="mr-[23px]">
        <svg viewBox="0 0 27 27" className="h-[27px] w-[26px]">
          <rect width="27" height="27" rx="3" fill="#fdfdff" />
          <path d="M3 7.500l10 3 9-7.500c-1.500 3-1 4-.5 6.500l3.500.5-4.500 2c-.5 4.500-2.500 6-5 7l-2 4-1.500-4.500-5 .5 4-3C7 14 5 11.500 3 7.500z" fill="#3c86e8" />
        </svg>
      </button>
      <button type="button" aria-label="Chrome" className="mr-[14px]">
        <svg viewBox="0 0 26 26" className="h-[25px] w-[25px]">
          <circle cx="13" cy="13" r="12.5" fill="#fbc116" />
          <path d="M2.2 6.7A12.5 12.5 0 0 1 23.8 6.7H13a6.3 6.3 0 0 0-5.5 9.400z" fill="#e33b2e" />
          <path d="M2.2 6.7A12.5 12.5 0 0 0 12 25.500l5.500-6.200a6.300 6.300 0 0 1-10-3.200z" fill="#2ba24c" />
          <circle cx="13" cy="13" r="6.2" fill="#fff" /><circle cx="13" cy="13" r="4.8" fill="#3a7df0" />
        </svg>
      </button>
      <button type="button" className="mr-[2px] flex h-[32px] w-[46px] items-center justify-center rounded-[2px] border border-white/70 bg-linear-to-br from-white/45 to-white/15">
        <span className="flex h-[27px] w-[22px] flex-col items-center rounded-b-[5px] bg-[#0c0c0c] pt-[2px] text-white">
          <span className="text-[9px] leading-[12px] font-bold">EPIC</span>
          <span className="text-[5px] leading-[6px] font-bold">GAMES</span>
        </span>
      </button>
      <button type="button" aria-label="Unreal Editor" className="flex h-[32px] w-[43px] items-center justify-center rounded-[2px] border border-white/80 bg-linear-to-b from-white/75 to-white/40 shadow-[2px_0_0_#5d7693,3px_0_0_#cfd8e2]">
        <svg viewBox="0 0 24 24" className="h-[25px] w-[25px]"><circle cx="12" cy="12" r="11.5" fill="#15171a" /><g transform="translate(1.500 .5)"><UnrealMark color="#fff" /></g></svg>
      </button>
    </div>
    <div className="ml-auto flex items-center text-white">
      <svg viewBox="0 0 126 20" className="mr-[9px] h-[20px] w-[126px]" fill="none">
        <path d="M2 9h10l1 7H1z" fill="#d8dde2" /><path d="M4 8l3-3 5-1" stroke="#c9d0d8" /><path d="M3 11.500h9M2.500 13.500h10" stroke="#667" strokeWidth=".8" strokeDasharray="1.500 1" />
        <circle cx="24" cy="9" r="5.500" fill="#1c22b8" stroke="#dfe3ff" /><path d="M22 7.500c0-3 4.200-2.500 4 0-.2 1.500-2 1.500-2 3M24 11.500v1.200" stroke="#fff" strokeWidth="1.400" />
        <path d="M38 5h4v3h-4zM40 4V3h3v3h-1" stroke="#fff" /><path d="M37.500 13h5L40 15.500z" fill="#fff" />
        <path d="M55 6c3-2 9 2 10 8l-2 2c-4 0-8-5-8-10z" fill="#111" stroke="#ccc" strokeWidth=".7" /><path d="M54 17l5-6 3 5z" fill="#fff" /><path d="M58 8l4 5" stroke="#ddd" />
        <path d="M73 5h11v9q-3 3-5.500 3T73 14z" fill="#111" /><path d="M75 7h3v3h-3zM79.500 7h3v3h-3zM75 13h7" stroke="#ddd" />
        <path d="M95 7h8v7h-8z" stroke="#fff" strokeWidth="1.400" fill="#2a4766" /><path d="M91 6h4M92 6v5h3M96 16.500h6" stroke="#fff" strokeWidth="1.300" />
        <path d="M110 9h3l4-4v12l-4-4h-3z" fill="#fff" /><path d="M119 8q2 3 0 6" stroke="#fff" strokeWidth="1.300" />
      </svg>
      <time className="mr-[10px] flex w-[46px] flex-col text-center font-['Open_Sans',sans-serif] text-[11px] leading-[15px]">
        <span>1:09</span>
        <span>2018/1/5</span>
      </time>
      <button type="button" aria-label="显示桌面" className="h-full w-[9px] border-l border-white/50 bg-white/20" />
    </div>
  </footer>
);

const App = () => {
  return (
    <div className="flex h-screen flex-col overflow-hidden bg-[#262626] font-['Roboto','Noto_Sans_CJK_SC',sans-serif]">
      <TitleBar />
      <main className="relative min-h-0 flex-1 overflow-hidden border-l border-[#999]">
        {/* canvas coordinates start at the window's top left corner */}
        <div className="absolute -top-[17px] right-0 bottom-0 -left-px">
          <Grid />
          {comments.map((c) => <Comment key={c.y} {...c} />)}
          <Wires />
          {setters.map((s) => <Setter key={`${s.x}-${s.y}`} s={s} />)}
          {ops.map((o) => <Operator key={`${o.x}-${o.y}`} o={o} />)}
          {nodes.map((n) => <BlueprintNode key={`${n.x}-${n.y}`} n={n} />)}
          {pills.map((p) => <Pill key={`${p.x}-${p.y}`} p={p} />)}
          <div className="pointer-events-none absolute inset-0 shadow-[inset_0_0_24px_rgba(0,0,0,0.4)]" />
        </div>
        <Toolbar />
        <p className="pointer-events-none absolute right-2 bottom-0 text-5xl leading-[74px] text-white/25">蓝图</p>
      </main>
      <Taskbar />
    </div>
  );
};

export default App;
